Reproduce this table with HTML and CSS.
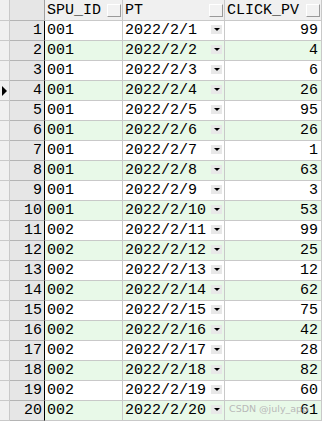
FILE: index.html
```html
<!DOCTYPE html>
<html>
<head>
<meta charset="utf-8">
<link rel="stylesheet" href="styles.css">
</head>
<body>
<div class="grid" id="grid">
  <div class="hd ind"></div>
  <div class="hd num"></div>
  <div class="hd col"><span>SPU_ID</span><i class="sortbox"></i></div>
  <div class="hd col"><span>PT</span><i class="sortbox"></i></div>
  <div class="hd col"><span>CLICK_PV</span><i class="sortbox"></i></div>
</div>
<div class="wm">CSDN @july_app</div>
<script src="app.js"></script>
</body>
</html>
```
FILE: styles.css
```css
* { box-sizing: border-box; }
html, body { margin: 0; padding: 0; background: #ffffff; }
body { width: 322px; height: 424px; overflow: hidden; position: relative; font-family: "Liberation Mono", monospace; font-size: 15px; color: #000; }
.grid { display: grid; grid-template-columns: 10px 35px 78px 102px 97px; grid-auto-rows: 20px; grid-template-rows: 21px; }
.grid > div { border-right: 1px solid #c9c9c9; border-bottom: 1px solid #c9c9c9; display: flex; align-items: center; white-space: nowrap; overflow: hidden; }
.hd { background: #f0f0f0; }
.hd.col { padding-left: 2px; justify-content: space-between; padding-right: 1px; }
.hd.num { border-right-color: #a0a0a0 !important; }
.sortbox { display: block; width: 14px; height: 13px; background: #f2f2f2; border-right: 1px solid #9a9a9a; border-bottom: 1px solid #9a9a9a; border-top: 1px solid #fff; border-left: 1px solid #fff; flex: none; }
.ind { background: #f0f0f0; position: relative; }
.ind.cur::after { content: ""; position: absolute; left: 2px; top: 5px; border-left: 5px solid #000; border-top: 5px solid transparent; border-bottom: 5px solid transparent; }
.num { background: #e6e6e6; justify-content: flex-end; padding-right: 2px; border-right: 1px solid #000 !important; border-bottom-color: #b4b4b4 !important; }
.c { padding-left: 2px; background: #fff; }
.r { justify-content: flex-end; padding-right: 3px; background: #fff; }
.g .c, .g.c, .g { }
.alt { background: #e8f9e8 !important; }
.pt { justify-content: space-between; padding-right: 2px; }
.dd { width: 11px; height: 9px; background: #e8e8e8; position: relative; flex: none; margin-top: -3px; }
.dd::after { content: ""; position: absolute; left: 3px; top: 3px; border-top: 3px solid #000; border-left: 3px solid transparent; border-right: 3px solid transparent; }
.wm { position: absolute; left: 229px; top: 403px; font-family: "DejaVu Sans", sans-serif; font-size: 9.5px; color: #b8b8b8; }
```
FILE: app.js
```js
var pv=[99,4,6,26,95,26,1,63,3,53,99,25,12,62,75,42,28,82,60,61];
var g=document.getElementById('grid');
for(var i=0;i<20;i++){
  var alt=(i%2===1)?' alt':'';
  var h='<div class="ind'+(i===3?' cur':'')+'"></div>'+
  '<div class="num">'+(i+1)+'</div>'+
  '<div class="c'+alt+'">'+(i<10?'001':'002')+'</div>'+
  '<div class="c pt'+alt+'"><span>2022/2/'+(i+1)+'</span><i class="dd"></i></div>'+
  '<div class="r'+alt+'">'+pv[i]+'</div>';
  g.insertAdjacentHTML('beforeend',h);
}
```
